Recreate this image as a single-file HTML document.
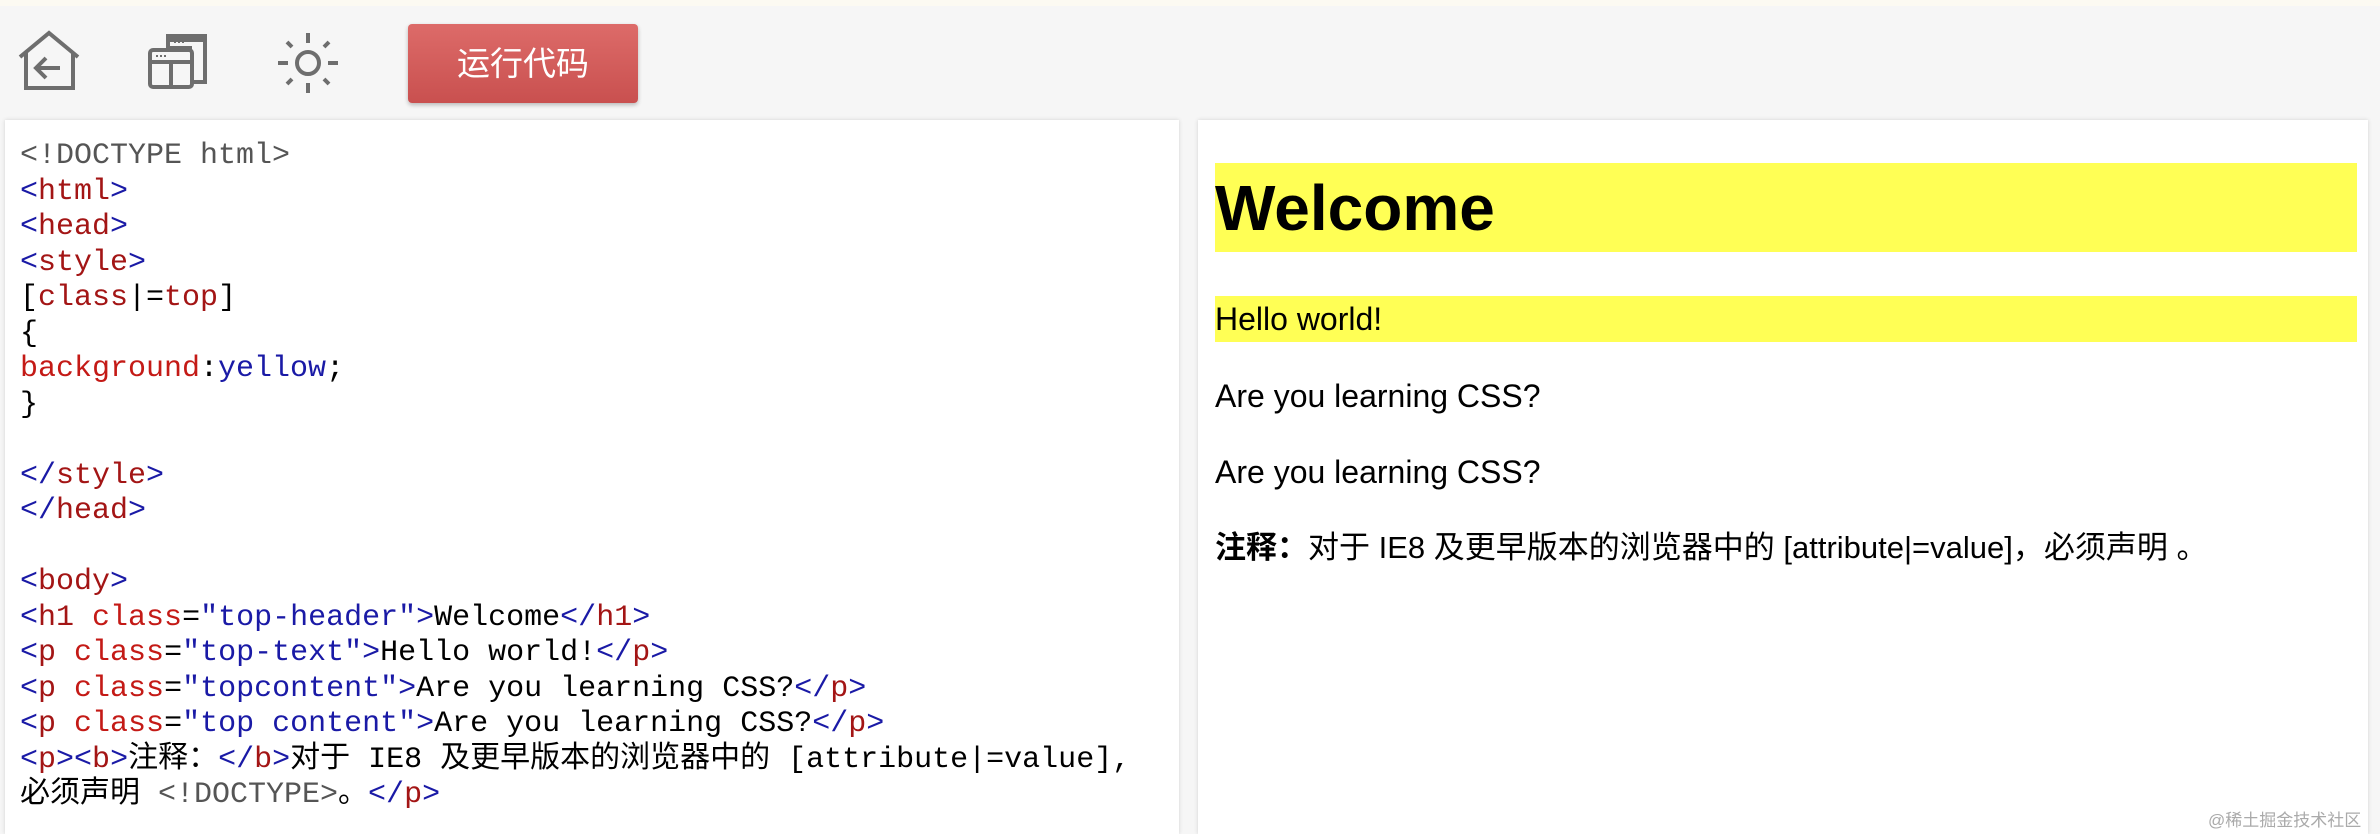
<!DOCTYPE html>
<html><head><style>
body{margin:0;width:2380px;height:834px;background:#f6f6f6;position:relative;overflow:hidden;font-family:"Liberation Sans","Noto Sans CJK SC",sans-serif}
.strip{position:absolute;left:0;top:0;width:2380px;height:6px;background:#fcfaf2}
.btn{position:absolute;left:408px;top:24px;width:230px;height:79px;border-radius:4px;background:linear-gradient(#dd6b69,#c9504f);box-shadow:0 2px 4px rgba(0,0,0,.25);color:#fff;font-size:33px;line-height:79px;text-align:center}
.panel{position:absolute;top:120px;height:714px;background:#fff;box-shadow:0 0 4px rgba(0,0,0,.15)}
pre{margin:0;position:absolute;left:20px;top:139px;font-family:"Liberation Mono","Noto Sans CJK SC",monospace;font-size:30px;line-height:35.5px;color:#000}
.g{color:#555}.b{color:#1a1aa6}.r{color:#a31515}.rd{color:#c41a16}
.y{position:absolute;left:1215px;width:1142px;background:#ffff55}
.rt{position:absolute;left:1215px;color:#000;font-size:32px}
</style></head><body>
<div class="strip"></div>
<svg style="position:absolute;left:0;top:0" width="400" height="118" fill="none" stroke="#6e6e6e" stroke-width="4">
<path d="M20 57 L49 33 L78 57 M26 52 V88 H73 V52"/>
<path d="M60 68 H36 M46 58 L36 68 L46 78"/>
<rect x="150" y="50" width="42" height="37" rx="3"/><path d="M150 62 H192 M171 62 V87"/>
<path d="M168 48 V36 H205 V82 H192 M168 48 H192 M168 40 H205"/>
<g stroke-width="2"><path d="M156 56 h2 M160 56 h2 M164 56 h2 M174 42 h2 M178 42 h2 M182 42 h2"/></g>
<circle cx="308" cy="63" r="11"/>
<path d="M308 33 V43 M308 83 V93 M278 63 H288 M328 63 H338 M287 42 L292 47 M324 79 L329 84 M329 42 L324 47 M292 79 L287 84"/>
</svg>
<div class="btn">运行代码</div>
<div class="panel" style="left:5px;width:1174px"></div>
<div class="panel" style="left:1198px;width:1170px"></div>
<pre><span class="g">&lt;!DOCTYPE html&gt;</span>
<span class="b">&lt;</span><span class="r">html</span><span class="b">&gt;</span>
<span class="b">&lt;</span><span class="r">head</span><span class="b">&gt;</span>
<span class="b">&lt;</span><span class="r">style</span><span class="b">&gt;</span>
[<span class="r">class</span>|=<span class="r">top</span>]
{
<span class="rd">background</span>:<span class="b">yellow</span>;
}

<span class="b">&lt;/</span><span class="r">style</span><span class="b">&gt;</span>
<span class="b">&lt;/</span><span class="r">head</span><span class="b">&gt;</span>

<span class="b">&lt;</span><span class="r">body</span><span class="b">&gt;</span>
<span class="b">&lt;</span><span class="r">h1</span> <span class="rd">class</span>=<span class="b">"top-header"</span><span class="b">&gt;</span>Welcome<span class="b">&lt;/</span><span class="r">h1</span><span class="b">&gt;</span>
<span class="b">&lt;</span><span class="r">p</span> <span class="rd">class</span>=<span class="b">"top-text"</span><span class="b">&gt;</span>Hello world!<span class="b">&lt;/</span><span class="r">p</span><span class="b">&gt;</span>
<span class="b">&lt;</span><span class="r">p</span> <span class="rd">class</span>=<span class="b">"topcontent"</span><span class="b">&gt;</span>Are you learning CSS?<span class="b">&lt;/</span><span class="r">p</span><span class="b">&gt;</span>
<span class="b">&lt;</span><span class="r">p</span> <span class="rd">class</span>=<span class="b">"top content"</span><span class="b">&gt;</span>Are you learning CSS?<span class="b">&lt;/</span><span class="r">p</span><span class="b">&gt;</span>
<span class="b">&lt;</span><span class="r">p</span><span class="b">&gt;&lt;</span><span class="r">b</span><span class="b">&gt;</span>注释：<span class="b">&lt;/</span><span class="r">b</span><span class="b">&gt;</span>对于 IE8 及更早版本的浏览器中的 [attribute|=value],
必须声明 <span class="g">&lt;!DOCTYPE&gt;</span>。<span class="b">&lt;/</span><span class="r">p</span><span class="b">&gt;</span></pre>
<div class="y" style="top:163px;height:89px"></div>
<div class="rt" style="top:168px;font-size:64px;font-weight:bold;line-height:80px">Welcome</div>
<div class="y" style="top:296px;height:46px"></div>
<div class="rt" style="top:299px;line-height:40px">Hello world!</div>
<div class="rt" style="top:376px;line-height:40px">Are you learning CSS?</div>
<div class="rt" style="top:452px;line-height:40px">Are you learning CSS?</div>
<div class="rt" style="top:528px;line-height:40px;font-size:31px"><b>注释：</b>对于 IE8 及更早版本的浏览器中的 [attribute|=value]，必须声明 。</div>
<div style="position:absolute;left:2208px;top:806px;font-size:17px;color:#aaa">@稀土掘金技术社区</div>
</body></html>
